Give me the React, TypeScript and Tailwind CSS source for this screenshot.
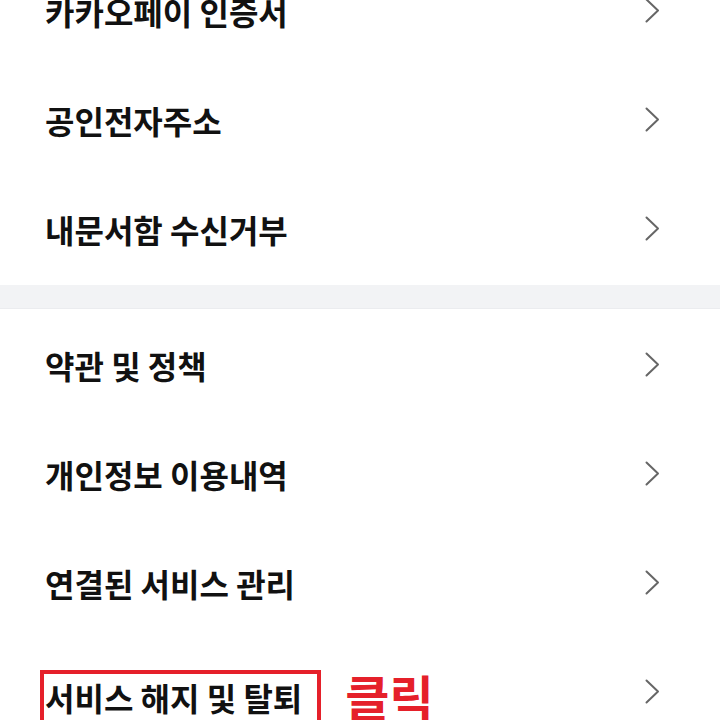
const topItems = ["카카오페이 인증서", "공인전자주소", "내문서함 수신거부"];
const bottomItems = ["약관 및 정책", "개인정보 이용내역", "연결된 서비스 관리"];

const font = { fontFamily: '"Noto Sans CJK KR", "Noto Sans", sans-serif' };

function Chevron() {
  return (
    <svg width="15" height="25" viewBox="0 0 15 25" fill="none" className="shrink-0">
      <polyline
        points="1.5,1.5 13,12.5 1.5,23.5"
        stroke="#666"
        strokeWidth="2"
        strokeLinecap="round"
        strokeLinejoin="round"
      />
    </svg>
  );
}

function Row({ label, children }: { label: string; children?: React.ReactNode }) {
  return (
    <div className="flex h-[109px] items-center justify-between pb-[4px] pl-[45px] pr-[60px]">
      {children ?? (
        <span className="text-[32px] font-bold leading-none text-[#111]">{label}</span>
      )}
      <Chevron />
    </div>
  );
}

export default function App() {
  return (
    <div className="h-[720px] w-[720px] overflow-hidden bg-white" style={font}>
      {/* 위쪽 메뉴 */}
      <div className="-mt-[42px]">
        {topItems.map((t) => (
          <Row key={t} label={t} />
        ))}
      </div>

      <div className="h-[24px] border-b border-[#ebecef] bg-[#f2f3f5]" />

      {/* 아래쪽 메뉴 */}
      <div className="pt-[3px]">
        {bottomItems.map((t) => (
          <Row key={t} label={t} />
        ))}
        <Row label="서비스 해지 및 탈퇴">
          <div className="flex items-center">
            <span className="-ml-[5px] mt-[14px] inline-flex h-[58px] items-center border-[4px] border-[#e5202a] pb-[4px] pl-[1px] pr-[15px] text-[32px] font-bold leading-none text-[#111]">
              서비스 해지 및 탈퇴
            </span>
            <span className="ml-[24px] mt-[6px] text-[48px] font-bold leading-none text-[#e5202a]">
              클릭
            </span>
          </div>
        </Row>
      </div>
    </div>
  );
}
